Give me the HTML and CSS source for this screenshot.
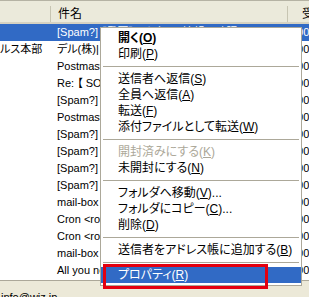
FILE: index.html
```html
<!DOCTYPE html>
<html lang="ja">
<head>
  <meta charset="UTF-8">
  <title>受信箱</title>
  <link rel="stylesheet" href="styles.css">
</head>
<body>
  <div class="window">
    <div class="list">
      <div class="head">
        <div class="hcell c1"></div>
        <div class="hcell c2">件名</div>
        <div class="hcell c3">受信日時</div>
      </div>
      <div class="rows">
        <div class="row selected"><div class="c1"></div><div class="c2">[Spam?] 【重要】アカウント情報の確認</div><div class="c3">2006/05/16 10:23</div></div>
        <div class="row"><div class="c1">ルス本部</div><div class="c2">デル(株)| 新製品のご案内</div><div class="c3">2006/05/16 09:58</div></div>
        <div class="row"><div class="c1"></div><div class="c2">Postmaster</div><div class="c3">2006/05/16 09:41</div></div>
        <div class="row"><div class="c1"></div><div class="c2">Re: 【 SOHO 】お問い合わせ</div><div class="c3">2006/05/16 09:12</div></div>
        <div class="row"><div class="c1"></div><div class="c2">[Spam?] Special offer</div><div class="c3">2006/05/16 08:47</div></div>
        <div class="row"><div class="c1"></div><div class="c2">Postmaster</div><div class="c3">2006/05/16 08:30</div></div>
        <div class="row"><div class="c1"></div><div class="c2">[Spam?] Re: your account</div><div class="c3">2006/05/16 07:55</div></div>
        <div class="row"><div class="c1"></div><div class="c2">[Spam?] Hello</div><div class="c3">2006/05/16 07:21</div></div>
        <div class="row"><div class="c1"></div><div class="c2">[Spam?] Best price</div><div class="c3">2006/05/16 06:48</div></div>
        <div class="row"><div class="c1"></div><div class="c2">[Spam?] Notice</div><div class="c3">2006/05/16 06:02</div></div>
        <div class="row"><div class="c1"></div><div class="c2">mail-box report</div><div class="c3">2006/05/16 05:00</div></div>
        <div class="row"><div class="c1"></div><div class="c2">Cron &lt;root@wiz&gt;</div><div class="c3">2006/05/16 04:02</div></div>
        <div class="row"><div class="c1"></div><div class="c2">Cron &lt;root@wiz&gt;</div><div class="c3">2006/05/16 03:02</div></div>
        <div class="row"><div class="c1"></div><div class="c2">mail-box report</div><div class="c3">2006/05/16 02:00</div></div>
        <div class="row"><div class="c1"></div><div class="c2">All you need</div><div class="c3">2006/05/16 01:15</div></div>
      </div>
    </div>
    <div class="status">info@wiz.jp</div>

    <!-- context menu -->
    <div class="menu">
      <div class="item bold">開く(<u>O</u>)</div>
      <div class="item">印刷(<u>P</u>)</div>
      <div class="sep"></div>
      <div class="item">送信者へ返信(<u>S</u>)</div>
      <div class="item">全員へ返信(<u>A</u>)</div>
      <div class="item">転送(<u>F</u>)</div>
      <div class="item">添付ファイルとして転送(<u>W</u>)</div>
      <div class="sep"></div>
      <div class="item disabled">開封済みにする(<u>K</u>)</div>
      <div class="item">未開封にする(<u>N</u>)</div>
      <div class="sep"></div>
      <div class="item">フォルダへ移動(<u>V</u>)...</div>
      <div class="item">フォルダにコピー(<u>C</u>)...</div>
      <div class="item">削除(<u>D</u>)</div>
      <div class="sep"></div>
      <div class="item">送信者をアドレス帳に追加する(<u>B</u>)</div>
      <div class="sep"></div>
      <div class="item active">プロパティ(<u>R</u>)</div>
    </div>
    <div class="mark"></div>
  </div>
</body>
</html>
```

FILE: styles.css
```css
body {
  margin: 0;
  overflow: hidden;
  background: #fff;
  font-family: "Liberation Sans", "Noto Sans CJK JP", sans-serif;
  font-size: 11px;
  font-feature-settings: "palt" 1;
  color: #000;
}

.window {
  position: relative;
  width: 309px;
  height: 297px;
  overflow: hidden;
}

.head {
  display: flex;
  align-items: center;
  height: 24px;
  box-sizing: border-box;
  padding-top: 4px;
  background: #ebeadb;
  border-top: 1px solid #b5b3a4;
  border-bottom: 2px solid #d6d2c2;
}

.hcell {
  height: 16px;
  line-height: 16px;
  font-size: 12px;
  white-space: nowrap;
  overflow: hidden;
}

.hcell.c1 {
  width: 50px;
  border-right: 1px solid #c7c5b2;
}

.hcell.c2 {
  width: 229px;
  padding-left: 7px;
  border-right: 1px solid #c7c5b2;
}

.hcell.c3 {
  flex: 1;
  padding-left: 14px;
}

.row {
  display: flex;
  height: 17px;
  line-height: 17px;
  white-space: nowrap;
}

.row > div {
  overflow: hidden;
}

.row .c1 {
  width: 51px;
  font-size: 11px;
}

.row .c2 {
  width: 230px;
  padding-left: 6px;
}

.row .c3 {
  flex: 1;
  padding-left: 4px;
}

.row.selected {
  background: #316ac5;
  color: #fff;
}

.status {
  height: 17px;
  margin-top: 1px;
  box-sizing: border-box;
  border-top: 1px solid #aca899;
  background: #ece9d8;
  padding: 10px 0 0 1px;
  line-height: 13px;
  overflow: hidden;
}

.menu {
  position: absolute;
  left: 100px;
  top: 27px;
  width: 200px;
  padding: 2px 0 2px;
  background: #fff;
  border: 1px solid #aca899;
  font-size: 12px;
}

.item {
  height: 16px;
  line-height: 16px;
  padding-left: 17px;
  white-space: nowrap;
}

.item.bold {
  font-weight: bold;
}

.item.disabled {
  color: #aca899;
}

.item.active {
  background: #316ac5;
  color: #fff;
}

.sep {
  height: 0;
  margin: 4px 2px;
  border-top: 1px solid #aca899;
}

.mark {
  position: absolute;
  left: 103px;
  top: 264px;
  width: 165px;
  height: 25px;
  box-sizing: border-box;
  border: 3px solid #e3000f;
}
```
